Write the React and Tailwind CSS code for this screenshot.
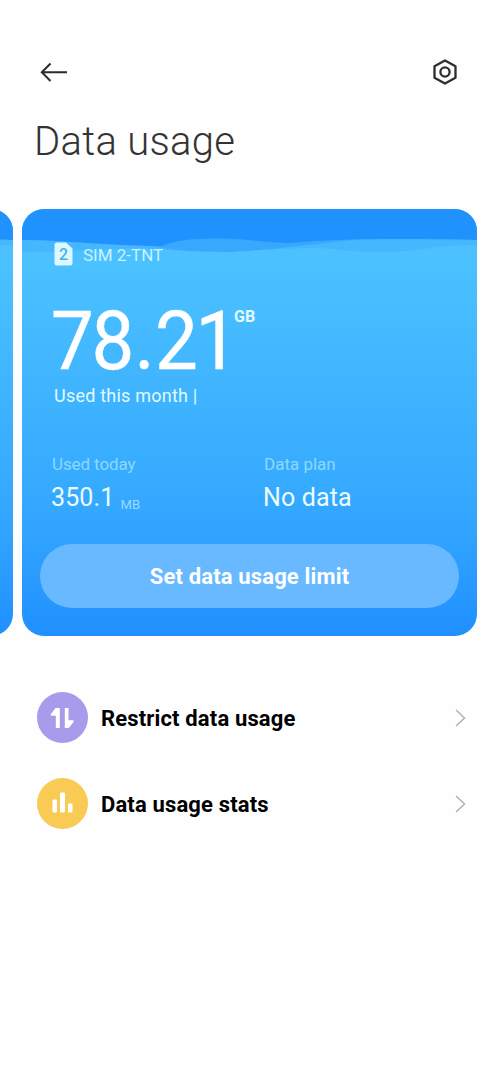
import React from "react";

const Waves = () => (
  <svg className="absolute inset-x-0 top-0 w-full h-[60px]" viewBox="0 0 455 60" fill="none">
    <path d="M0 0 H455 V44 H0 Z" fill="#1f92fe" />
    <path d="M0 31 C40 31 80 37 140 37 C155 31 170 29.500 200 29.500 C225 30 250 34 270 34 C300 31 330 30 370 30 C400 30 430 30 455 31 V60 H0 Z" fill="#38a8ff" />
    <path d="M0 31 C40 31 80 36 130 37 C155 42 180 43 210 43 C250 41 290 35 330 31 C350 30 400 30 455 31 V60 H0 Z" fill="#45b7ff" />
    <path d="M0 43 C50 43 90 39 120 39 C150 42 180 43 210 43 C240 41 280 38 310 40 C340 44 370 44 395 41 C420 37 440 36 455 36 V60 H0 Z" fill="#4cc1ff" />
  </svg>
);

const BackArrow = () => (
  <svg width="28" height="20" viewBox="0 0 28 20" fill="none" stroke="#2b2b2b" strokeWidth="2">
    <path d="M27 10.300 H2 M10.500 1.500 L1.800 10.300 L10.500 19" />
  </svg>
);

const SettingsIcon = () => (
  <svg width="24" height="26" viewBox="0 0 24 26" fill="none" stroke="#2e2e2e" strokeWidth="2.3" strokeLinejoin="round">
    <path d="M12 1.500 L22.500 7.200 V18.800 L12 24.500 L1.500 18.800 V7.200 Z" />
    <circle cx="12" cy="13" r="4.600" />
  </svg>
);

const SimIcon = () => (
  <div className="relative w-[19px] h-6">
    <svg className="absolute inset-0" width="19" height="24" viewBox="0 0 19 24">
      <path d="M3 0.500 H12 L18.500 6.500 V21 Q18.500 23.500 16 23.500 H3 Q0.500 23.500 0.500 21 V3 Q0.500 0.500 3 0.500 Z" fill="#dcf8ff" />
    </svg>
    <span className="relative block text-center text-[16px] leading-[25px] font-medium text-[#43b3e8]">2</span>
  </div>
);

const ArrowsIcon = () => (
  <svg width="51" height="51" viewBox="0 0 51 51" fill="#fff">
    <path d="M18.500 16 H22.800 V36 H18.800 V23.800 H13.800 V22.300 Z" />
    <path d="M27.800 16 H31.500 V28.300 H36.500 V30 L31.800 36 H27.800 Z" />
  </svg>
);

const BarsIcon = () => (
  <svg width="51" height="51" viewBox="0 0 51 51" fill="#fff">
    <rect x="15.500" y="21.500" width="4.500" height="13" rx="1" />
    <rect x="23" y="14.500" width="5" height="20" rx="1" />
    <rect x="31" y="25.500" width="4.500" height="9" rx="1" />
  </svg>
);

const Chevron = () => (
  <svg width="11" height="18" viewBox="0 0 11 18" fill="none" stroke="#b2b2b2" strokeWidth="1.5">
    <path d="M1 1 L9.500 9 L1 17" />
  </svg>
);

const rows = [
  { label: "Restrict data usage", color: "bg-[#a89bec]", icon: <ArrowsIcon /> },
  { label: "Data usage stats", color: "bg-[#f9ca54]", icon: <BarsIcon /> },
];

const SimCard = () => (
  <section className="relative w-[455px] h-[427px] flex-shrink-0 rounded-[22px] overflow-hidden bg-linear-to-b from-[#4cc1ff] from-12% via-[#33a7ff] via-72% to-[#2090fe]">
    <Waves />
    <div className="relative pt-[33px] px-[18px] text-white">
      <div className="flex items-center gap-[10px] pl-[14px] h-6">
        <SimIcon />
        <span className="relative top-px text-[17px] leading-6 text-[#c8f2ff]">SIM 2-TNT</span>
      </div>
      <div className="flex items-start pl-[11px] mt-[43px] h-[64px]">
        <span className="block w-[183px] origin-left scale-x-[0.93] whitespace-nowrap text-[82px] leading-[64px] tracking-[-2.6px] [-webkit-text-stroke:0.5px_white]">
          7<span className="tracking-[0.3px]">8.</span>21
        </span>
        <span className="-mt-[2px] text-[16px] leading-5 font-bold text-[#e2faff]">GB</span>
      </div>
      <div className="pl-[14px] mt-[11px] text-[18px] leading-6 tracking-[0.22px] text-[#e2faff]">Used this month |</div>
      <div className="flex mt-[44px] pl-[11px]">
        <div className="w-[212px]">
          <div className="pl-px text-[17px] leading-6 tracking-[-0.1px] text-[#8dd8ff]">Used today</div>
          <div className="mt-[6px] text-[25px] leading-8 tracking-[0.1px] text-[#ecfcff]">
            350.1 <span className="relative top-[3px] text-[13px] text-[#9bdaff]">MB</span>
          </div>
        </div>
        <div>
          <div className="pl-px text-[17px] leading-6 text-[#8dd8ff]">Data plan</div>
          <div className="mt-[6px] text-[25px] leading-8 tracking-[0.15px] text-[#ecfcff]">No data</div>
        </div>
      </div>
      <button className="block mt-[26px] w-[419px] h-16 pt-px rounded-full bg-[#68b9ff] text-[22px] leading-8 font-bold tracking-[0.15px] text-white">
        Set data usage limit
      </button>
    </div>
  </section>
);

const App = () => (
  <main className="w-[499px] h-[1080px] overflow-hidden bg-[#fefefe] font-['Roboto',sans-serif]">
    <header className="flex items-center justify-between pt-[59px] pl-[40px] pr-[42px]">
      <BackArrow />
      <SettingsIcon />
    </header>
    <h1 className="mt-[33px] pl-[34px] text-[40px] leading-[48px] tracking-[0.3px] font-light text-[#333]">Data usage</h1>
    <div className="flex gap-[9px] mt-[43px]">
      <div className="flex-shrink-0 w-[13px] h-[427px] overflow-hidden flex justify-end">
        <div className="relative w-[455px] h-full flex-shrink-0 rounded-[22px] overflow-hidden bg-linear-to-b from-[#4cc1ff] from-12% via-[#33a7ff] via-72% to-[#2090fe]">
          <Waves />
        </div>
      </div>
      <SimCard />
    </div>
    <nav className="mt-[56px] pl-[37px] pr-[33px] space-y-[35px]">
      {rows.map((row) => (
        <div className="flex items-center" key={row.label}>
          <div className={`w-[51px] h-[51px] rounded-full ${row.color}`}>{row.icon}</div>
          <span className="flex-1 ml-[13px] pt-[2px] text-[22px] leading-8 font-bold tracking-[0.15px] text-black">{row.label}</span>
          <Chevron />
        </div>
      ))}
    </nav>
  </main>
);

export default App;
